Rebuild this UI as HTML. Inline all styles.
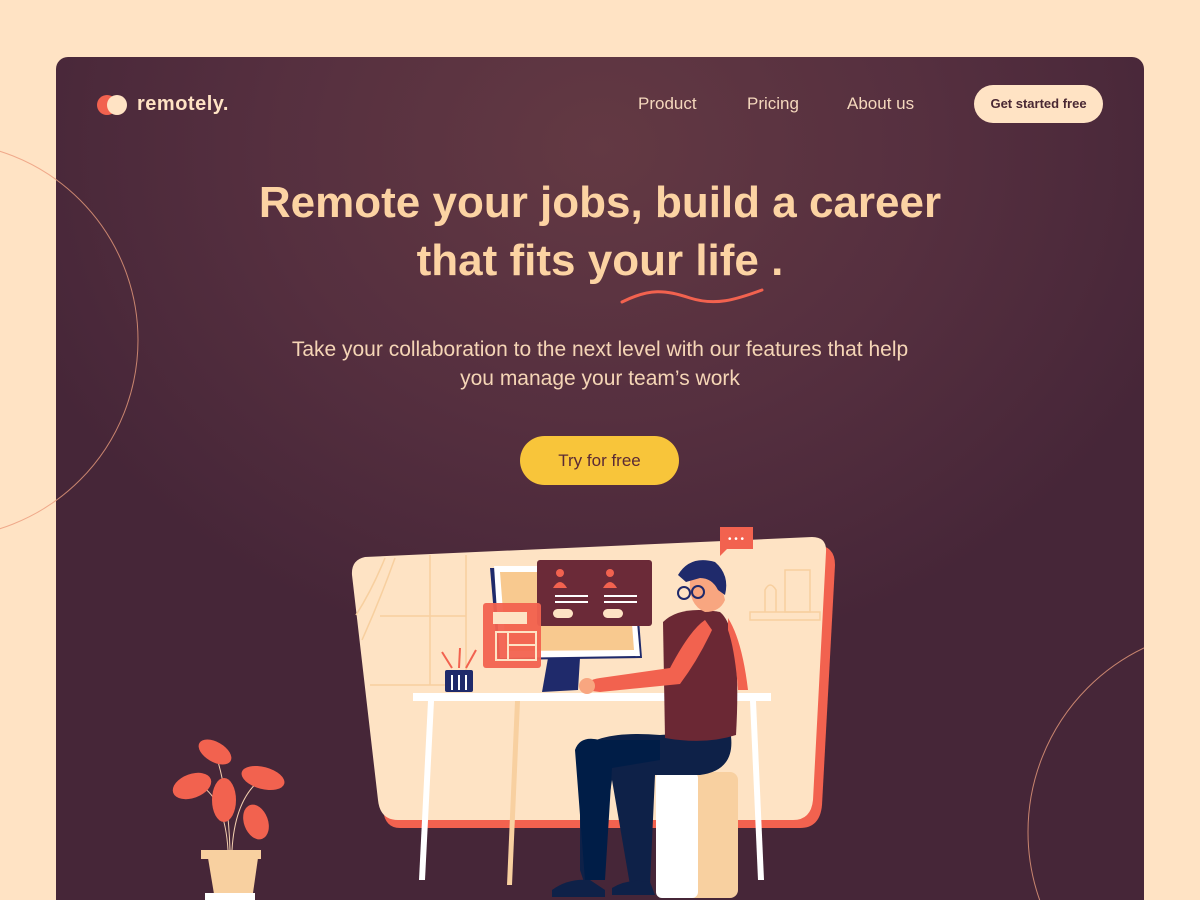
<!DOCTYPE html>
<html><head><meta charset="utf-8"><style>
*{margin:0;padding:0;box-sizing:border-box}
body{width:1200px;height:900px;overflow:hidden;background:#ffe3c4;font-family:"Liberation Sans",sans-serif;position:relative}
.card{position:absolute;left:56px;top:57px;width:1088px;height:843px;border-radius:12px 12px 0 0;overflow:hidden;
background:radial-gradient(ellipse 620px 520px at 544px 90px,#633943 0%,#552f3f 55%,#462638 100%)}
.logo{position:absolute;left:41px;top:36px;display:flex;align-items:center}
.c1{width:20px;height:20px;border-radius:50%;background:#f2624f}
.c2{width:20px;height:20px;border-radius:50%;background:#ffe3c4;margin-left:-10px}
.logo span{color:#ffe3c4;font-weight:bold;font-size:20px;margin-left:10px;letter-spacing:0.5px}
.nav{position:absolute;top:37px;color:#f5d8bd;font-size:17px}
.btn{position:absolute;left:918px;top:28px;width:129px;height:38px;border-radius:19px;background:#ffe3c4;color:#4a2833;font-size:13px;font-weight:bold;text-align:center;line-height:38px}
h1{position:absolute;left:0;width:1088px;top:117px;text-align:center;color:#fcd3a3;font-size:44px;line-height:58px;font-weight:bold}
p{position:absolute;left:0;width:1088px;top:278px;text-align:center;color:#f5d5b6;font-size:21px;line-height:29px}
.try{position:absolute;left:464px;top:379px;width:159px;height:49px;border-radius:25px;background:#f8c53a;color:#5a2a35;font-size:17px;text-align:center;line-height:49px}
</style></head><body>
<svg style="position:absolute;left:0;top:0" width="1200" height="900">
<circle cx="-60" cy="340" r="198" fill="none" stroke="#f0a98a" stroke-width="1"/>
</svg>
<div class="card">
<svg style="position:absolute;left:-56px;top:-57px" width="1200" height="900">
<circle cx="-60" cy="340" r="198" fill="none" stroke="#c9856f" stroke-width="1"/>
<circle cx="1232" cy="832" r="204" fill="none" stroke="#c9856f" stroke-width="1"/>
<path d="M622 302 C650 288,665 290,690 298 C715 306,735 300,762 290" stroke="#f2624f" stroke-width="3" fill="none" stroke-linecap="round"/>
<path d="M360 562 L815 545 Q835 545 835 565 L822 805 Q820 828 800 828 L400 828 Q385 828 383 810 Z" fill="#f2624f"/>
<path d="M365 557 L812 537 Q827 537 826 552 L813 800 Q811 820 793 820 L398 820 Q380 820 378 800 L352 575 Q351 560 365 557 Z" fill="#fee3c4"/>
<g stroke="#f7cf9f" stroke-width="1.5" fill="none">
<line x1="430" y1="555" x2="430" y2="685"/><line x1="466" y1="555" x2="466" y2="685"/>
<line x1="380" y1="616" x2="466" y2="616"/><line x1="370" y1="685" x2="466" y2="685"/>
<path d="M395 558 Q380 600 362 640"/><path d="M385 558 Q372 590 356 615"/>
<rect x="750" y="612" width="70" height="8"/><rect x="785" y="570" width="25" height="42"/><path d="M765 612 V590 Q770 580 776 590 V612"/>
</g>
<path d="M490 568 L635 568 L642 658 L498 660 Z" fill="#1f2a6b"/>
<path d="M494 566 L632 566 L640 656 L500 658 Z" fill="#fff"/>
<path d="M500 572 L628 572 L634 650 L506 651 Z" fill="#f8c98f"/>
<path d="M548 658 L580 658 L578 690 L542 692 Z" fill="#1f2a6b"/>
<rect x="537" y="560" width="115" height="66" rx="3" fill="#6b2a38"/>
<circle cx="560" cy="573" r="4" fill="#f2624f"/><path d="M553 588 Q560 576 567 588Z" fill="#f2624f"/>
<circle cx="610" cy="573" r="4" fill="#f2624f"/><path d="M603 588 Q610 576 617 588Z" fill="#f2624f"/>
<rect x="555" y="595" width="33" height="2" fill="#fff"/><rect x="555" y="601" width="33" height="2" fill="#fff"/>
<rect x="604" y="595" width="33" height="2" fill="#fff"/><rect x="604" y="601" width="33" height="2" fill="#fff"/>
<rect x="553" y="609" width="20" height="9" rx="4.5" fill="#fee3c4"/><rect x="603" y="609" width="20" height="9" rx="4.5" fill="#fee3c4"/>
<rect x="483" y="603" width="58" height="65" rx="3" fill="#f2624f" opacity=".95"/>
<rect x="493" y="612" width="34" height="12" fill="#fee3c4"/>
<rect x="496" y="632" width="40" height="28" fill="none" stroke="#fee3c4" stroke-width="2"/><line x1="508" y1="632" x2="508" y2="660" stroke="#fee3c4" stroke-width="2"/><line x1="508" y1="645" x2="536" y2="645" stroke="#fee3c4" stroke-width="2"/>
<rect x="720" y="527" width="33" height="22" fill="#f2624f"/><path d="M720 549 L720 556 L727 549Z" fill="#f2624f"/>
<text x="728" y="542" fill="#fff" font-size="10">• • •</text>
<rect x="445" y="670" width="28" height="22" rx="2" fill="#1f2a6b"/>
<g stroke="#fff" stroke-width="2"><line x1="452" y1="675" x2="452" y2="690"/><line x1="459" y1="675" x2="459" y2="690"/><line x1="466" y1="675" x2="466" y2="690"/></g>
<g stroke="#f2624f" stroke-width="2" fill="none"><path d="M452 668 L442 652"/><path d="M459 668 L460 648"/><path d="M466 668 L476 650"/></g>
<rect x="413" y="693" width="358" height="8" fill="#fff"/>
<path d="M428 701 L434 701 L425 880 L419 880 Z" fill="#fff"/>
<path d="M515 701 L520 701 L512 885 L507 885 Z" fill="#f8d0a0"/>
<path d="M750 701 L756 701 L764 880 L758 880 Z" fill="#fff"/>
<rect x="656" y="772" width="82" height="126" rx="8" fill="#f8d0a0"/>
<rect x="656" y="772" width="42" height="126" rx="6" fill="#fff"/>
<path d="M580 750 Q600 730 660 735 L730 730 Q738 770 700 775 L655 775 L650 885 L630 885 L612 780 L600 860 L585 885 L580 870 Z" fill="#0e2148"/>
<path d="M575 750 Q580 735 600 740 L660 740 L660 760 L612 768 L605 880 L585 880 Z" fill="#001d47"/>
<path d="M663 622 Q680 605 720 612 Q742 630 736 735 Q705 745 665 738 Z" fill="#6b2834"/>
<path d="M705 620 Q690 630 670 668 L600 678 Q585 680 583 690 L600 692 L680 684 Q698 660 712 630 Z" fill="#f2624f"/>
<path d="M728 618 Q742 640 748 690 L738 690 Q735 650 728 630Z" fill="#f2624f"/>
<circle cx="587" cy="686" r="8" fill="#f8a680"/>
<path d="M690 580 Q700 565 718 572 L725 600 Q720 612 705 612 Q688 605 690 580Z" fill="#f8a680"/>
<path d="M678 575 Q690 555 715 562 Q730 575 725 595 L718 590 Q712 578 700 578 L686 582Z" fill="#1f2a6b"/>
<circle cx="684" cy="593" r="6" fill="none" stroke="#1f2a6b" stroke-width="2"/><circle cx="698" cy="592" r="6" fill="none" stroke="#1f2a6b" stroke-width="2"/>
<path d="M552 890 Q568 878 590 880 L605 890 L605 897 L552 897Z" fill="#0e2148"/>
<path d="M612 888 Q628 878 650 882 L655 895 L612 895Z" fill="#0e2148"/>
<path d="M215 900 L208 858 L258 858 L252 900Z" fill="#f8d0a0"/>
<rect x="201" y="850" width="60" height="9" fill="#f8d0a0"/>
<rect x="205" y="893" width="50" height="7" fill="#fff"/>
<g stroke="#f5d0b0" stroke-width="1" fill="none"><path d="M228 850 Q225 800 200 785"/><path d="M232 850 Q235 800 260 780"/><path d="M230 850 Q228 790 215 752"/></g>
<g fill="#f2624f">
<ellipse cx="192" cy="786" rx="20" ry="12" transform="rotate(-20 192 786)"/>
<ellipse cx="263" cy="778" rx="22" ry="11" transform="rotate(15 263 778)"/>
<ellipse cx="215" cy="752" rx="18" ry="10" transform="rotate(30 215 752)"/>
<ellipse cx="256" cy="822" rx="12" ry="18" transform="rotate(-20 256 822)"/>
<ellipse cx="224" cy="800" rx="12" ry="22"/>
</g>
</svg>
<div class="logo"><div class="c1"></div><div class="c2"></div><span>remotely.</span></div>
<div class="nav" style="left:582px">Product</div>
<div class="nav" style="left:691px">Pricing</div>
<div class="nav" style="left:791px">About us</div>
<div class="btn">Get started free</div>
<h1>Remote your jobs, build a career<br>that fits your life .</h1>
<p>Take your collaboration to the next level with our features that help<br>you manage your team’s work</p>
<div class="try">Try for free</div>
</div>
</body></html>
